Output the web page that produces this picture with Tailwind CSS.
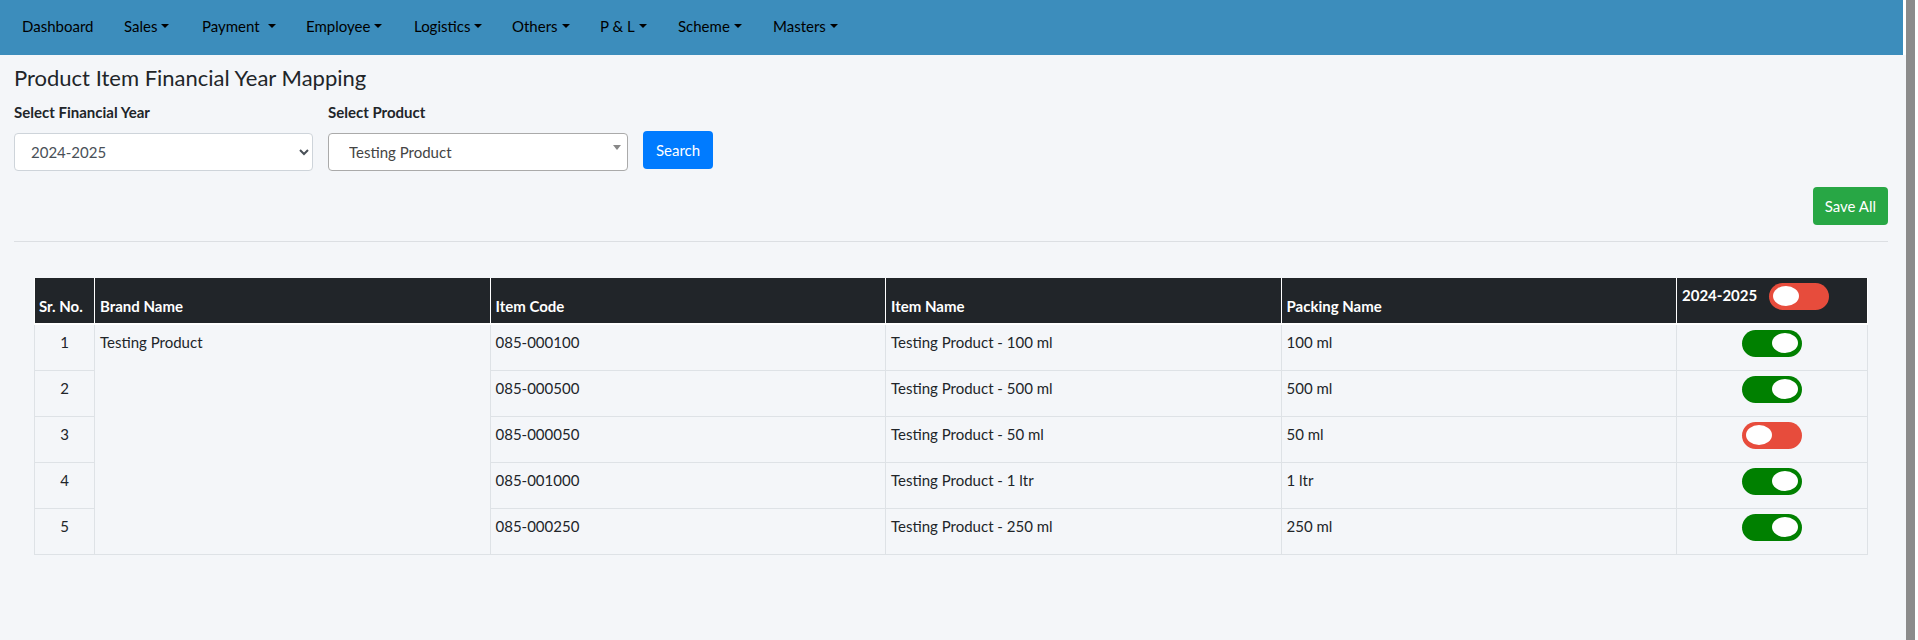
<!DOCTYPE html>
<html lang="en">
<head>
<meta charset="utf-8">
<title>Product Item Financial Year Mapping</title>
<script src="https://cdn.jsdelivr.net/npm/@tailwindcss/browser@4"></script>
</head>
<body class="flex min-h-screen bg-white font-[Lato,'Noto_Sans',sans-serif] text-[15px] leading-6 text-[#212529]">
<div class="flex min-w-0 flex-1 flex-col">
  <nav class="mr-[3px] h-[55px] bg-[#3c8dbc] pb-[3px] text-black" aria-label="Main">
    <ul class="flex h-full items-center pl-[22px]">
      <li class="w-[102px]"><a href="#">Dashboard</a></li>
      <li class="w-[78px]"><a href="#" class="flex items-center gap-1">Sales<span class="border-x-4 border-t-4 border-x-transparent border-t-black"></span></a></li>
      <li class="w-[104px]"><a href="#" class="flex items-center gap-2">Payment<span class="border-x-4 border-t-4 border-x-transparent border-t-black"></span></a></li>
      <li class="w-[108px]"><a href="#" class="flex items-center gap-1">Employee<span class="border-x-4 border-t-4 border-x-transparent border-t-black"></span></a></li>
      <li class="w-[98px]"><a href="#" class="flex items-center gap-1">Logistics<span class="border-x-4 border-t-4 border-x-transparent border-t-black"></span></a></li>
      <li class="w-[88px]"><a href="#" class="flex items-center gap-1">Others<span class="border-x-4 border-t-4 border-x-transparent border-t-black"></span></a></li>
      <li class="w-[78px]"><a href="#" class="flex items-center gap-1">P &amp; L<span class="border-x-4 border-t-4 border-x-transparent border-t-black"></span></a></li>
      <li class="w-[95px]"><a href="#" class="flex items-center gap-1">Scheme<span class="border-x-4 border-t-4 border-x-transparent border-t-black"></span></a></li>
      <li><a href="#" class="flex items-center gap-1">Masters<span class="border-x-4 border-t-4 border-x-transparent border-t-black"></span></a></li>
    </ul>
  </nav>
  <main class="flex-1 bg-[#f4f6f9] pr-[18px] pl-[14px]">
    <h1 class="pt-[7px] text-[22px] leading-8">Product Item Financial Year Mapping</h1>
    <form class="mt-1.5 flex items-start gap-[15px]">
      <div class="w-[299px]">
        <label for="year" class="block font-bold">Select Financial Year</label>
        <select id="year" class="mt-[9px] h-[38px] w-full rounded border border-[#ced4da] bg-white pl-3 text-[#495057]"><option>2024-2025</option></select>
      </div>
      <div class="w-[300px]">
        <label for="product" class="block font-bold">Select Product</label>
        <div class="relative mt-[9px]">
          <select id="product" class="h-[38px] w-full appearance-none rounded border border-[#aaaaaa] bg-white pl-5 text-[#444444]"><option>Testing Product</option></select>
          <span class="pointer-events-none absolute top-3 right-[7px] border-x-4 border-t-[5px] border-x-transparent border-t-[#888888]"></span>
        </div>
      </div>
      <button type="button" class="mt-[31px] h-[38px] rounded bg-[#007bff] px-[13px] text-white">Search</button>
    </form>
    <div class="mt-4 flex justify-end"><button type="button" class="h-[38px] rounded bg-[#28a745] px-3 text-white">Save All</button></div>
    <hr class="mt-4 border-[#dcdfe3]">
    <div class="mt-9 mr-5 ml-5">
      <table class="w-full table-fixed border-collapse">
        <colgroup><col class="w-[60px]"><col><col><col><col><col class="w-[191px]"></colgroup>
        <thead>
          <tr class="h-[46px] bg-[#212529] text-left align-bottom text-white">
            <th class="border border-t-0 border-b-2 border-white px-1 pb-[5px]">Sr. No.</th>
            <th class="border border-t-0 border-b-2 border-white px-[5px] pb-[5px]">Brand Name</th>
            <th class="border border-t-0 border-b-2 border-white px-[5px] pb-[5px]">Item Code</th>
            <th class="border border-t-0 border-b-2 border-white px-[5px] pb-[5px]">Item Name</th>
            <th class="border border-t-0 border-b-2 border-white px-[5px] pb-[5px]">Packing Name</th>
            <th class="border border-t-0 border-b-2 border-white px-[5px] pt-[5px] align-top">
              <label class="flex items-start gap-3">2024-2025
                <input type="checkbox" class="h-[27px] w-[60px] appearance-none rounded-full bg-[#e74c3c] pt-[3px] before:ml-1 before:block before:h-5 before:w-[26px] before:rounded-[50%] before:bg-white before:content-[''] checked:bg-[#008000] checked:before:ml-[30px]"></label>
            </th>
          </tr>
        </thead>
        <tbody id="rows"></tbody>
      </table>
    </div>
  </main>
</div>
<div class="mr-[3px] w-[9px] bg-[#8b8b8b]"></div>
<script>
const items = [
  ['085-000100', '100 ml', true],
  ['085-000500', '500 ml', true],
  ['085-000050', '50 ml', false],
  ['085-001000', '1 ltr', true],
  ['085-000250', '250 ml', true]
];
const cell = 'border border-[#dee2e6] px-[5px] pt-[5px]';
document.getElementById('rows').innerHTML = items.map(([code, size, on], i) => `
  <tr class="h-[46px] align-top">
    <td class="${cell} text-center">${i + 1}</td>
    ${i === 0 ? `<td class="${cell}" rowspan="5">Testing Product</td>` : ''}
    <td class="${cell}">${code}</td>
    <td class="${cell}">Testing Product - ${size}</td>
    <td class="${cell}">${size}</td>
    <td class="${cell}"><input type="checkbox" aria-label="${code} 2024-2025" ${on ? 'checked' : ''} class="mx-auto block h-[27px] w-[60px] appearance-none rounded-full bg-[#e74c3c] pt-[3px] before:ml-1 before:block before:h-5 before:w-[26px] before:rounded-[50%] before:bg-white before:content-[''] checked:bg-[#008000] checked:before:ml-[30px]"></td>
  </tr>`).join('');
</script>
</body>
</html>
